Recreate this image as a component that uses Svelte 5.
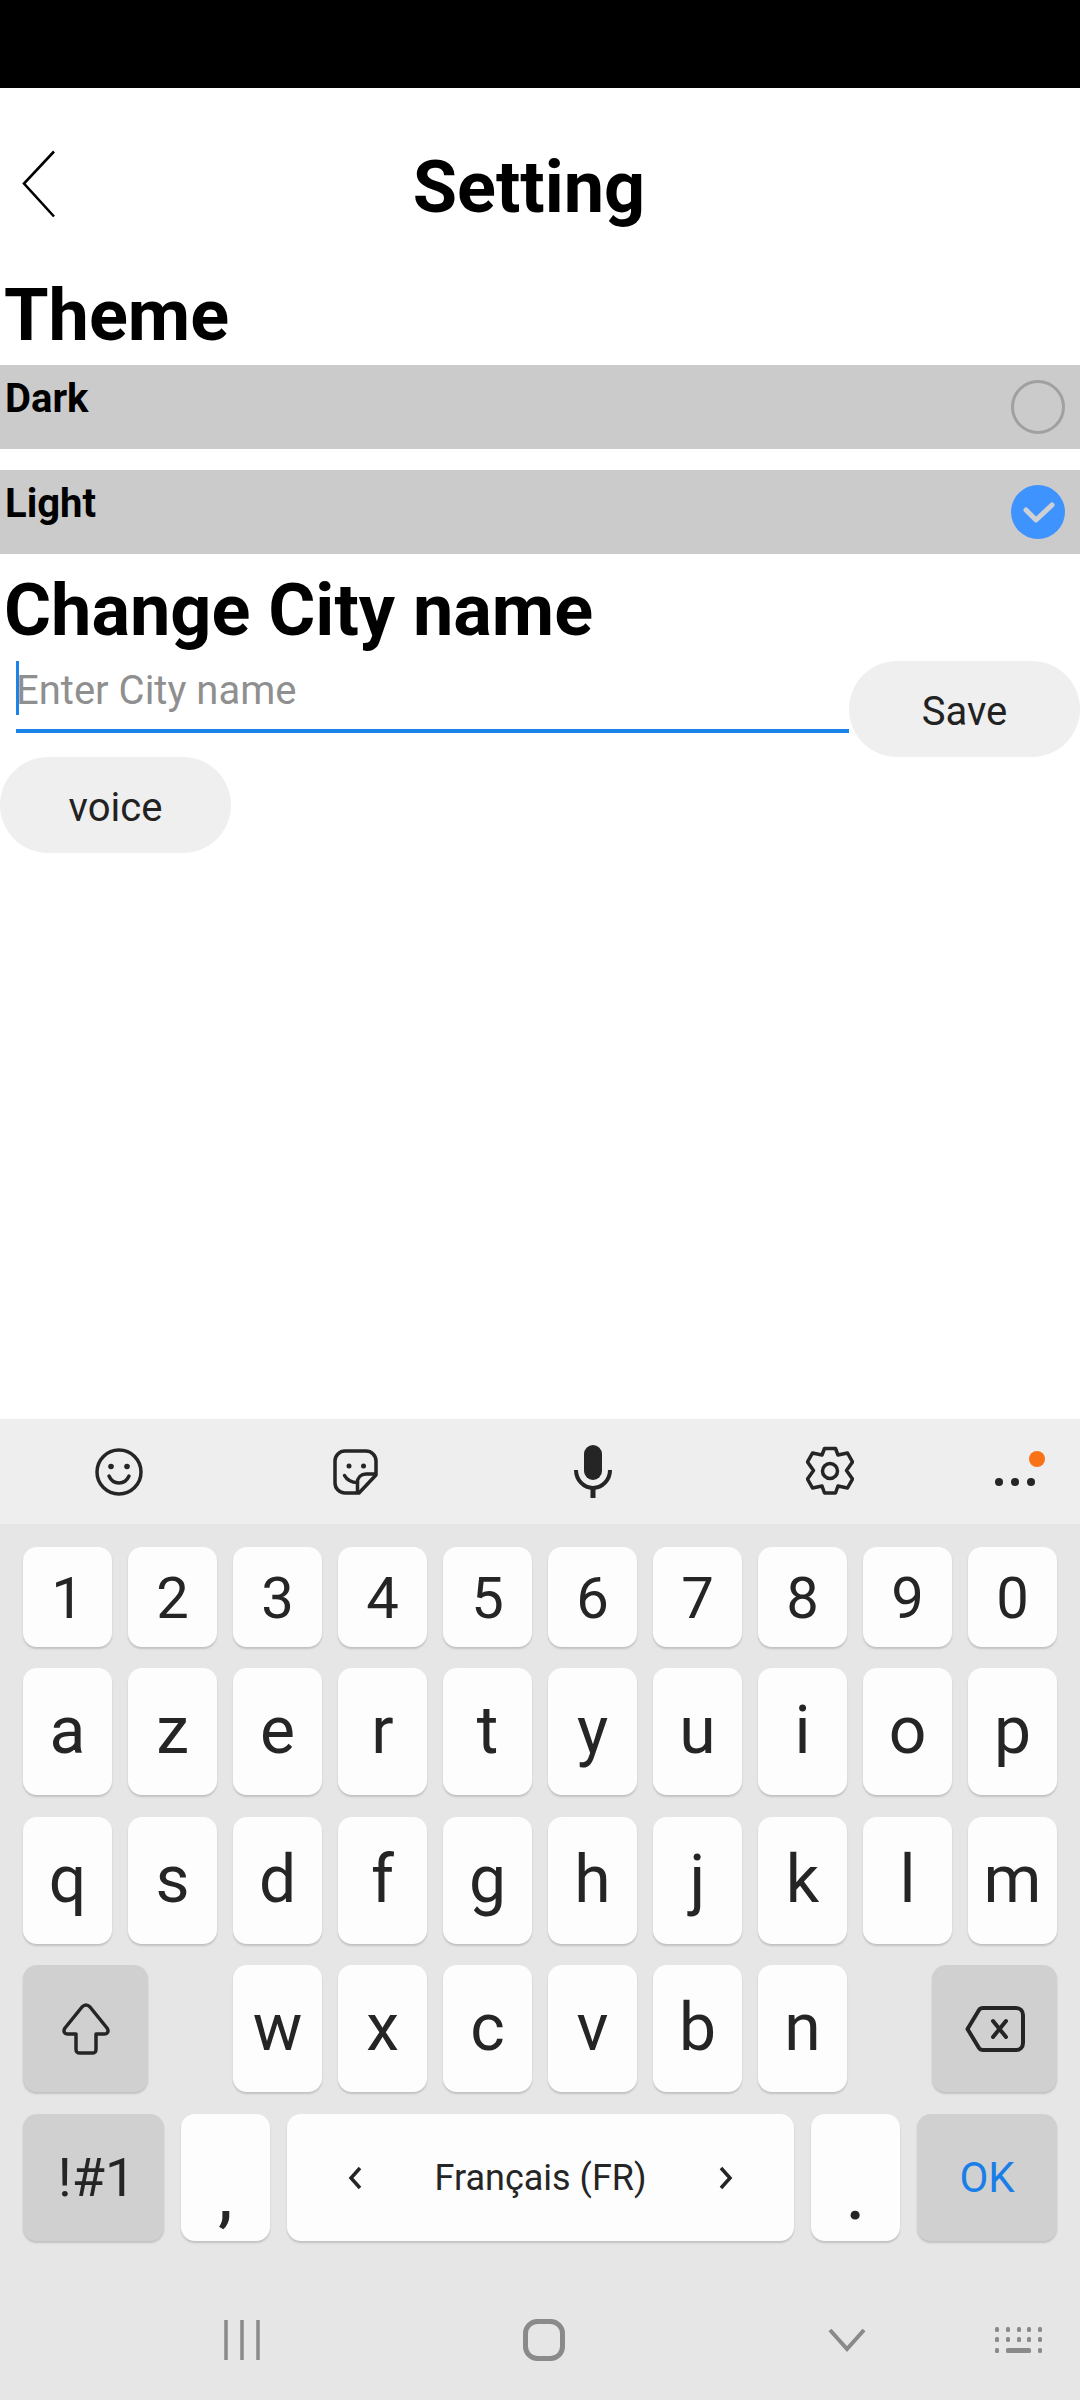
<script>
  const digits = ["1", "2", "3", "4", "5", "6", "7", "8", "9", "0"];
  const rowA = ["a", "z", "e", "r", "t", "y", "u", "i", "o", "p"];
  const rowB = ["q", "s", "d", "f", "g", "h", "j", "k", "l", "m"];
  const rowC = ["w", "x", "c", "v", "b", "n"];

  let city = $state("");
</script>

<div class="screen">
  <div class="status"></div>

  <main>
    <header>
      <svg class="back" width="34" height="68" viewBox="0 0 34 68" aria-hidden="true">
        <path d="M32 1.500 2 33.500l30 33" fill="none" stroke="#000" stroke-width="2.600" />
      </svg>
      <h1>Setting</h1>
    </header>

    <h2 class="theme-title">Theme</h2>
    <div class="option">
      <span>Dark</span>
      <i class="radio"></i>
    </div>
    <div class="option">
      <span>Light</span>
      <i class="radio on">
        <svg width="54" height="54" viewBox="0 0 54 54" aria-hidden="true">
          <path d="M15 25l10 10 16-15" fill="none" stroke="#cfd0d4" stroke-width="5" stroke-linecap="round" stroke-linejoin="round" />
        </svg>
      </i>
    </div>

    <h2 class="city-title">Change City name</h2>
    <div class="city-row">
      <div class="field">
        <i class="caret"></i>
        <input type="text" bind:value={city} placeholder="Enter City name" />
      </div>
      <button type="button" class="pill">Save</button>
    </div>
    <button type="button" class="pill">voice</button>
  </main>

  <section class="keyboard">
    <div class="toolbar">
      <div class="tool">
        <svg width="48" height="48" viewBox="0 0 48 48" aria-hidden="true">
          <circle cx="24" cy="24" r="22" fill="none" stroke="#252525" stroke-width="3.500" />
          <circle cx="16" cy="18.500" r="2.800" fill="#252525" />
          <circle cx="32" cy="18.500" r="2.800" fill="#252525" />
          <path d="M14 28c2 4.500 5.500 7 10 7s8-2.500 10-7" fill="none" stroke="#252525" stroke-width="3.500" stroke-linecap="round" />
        </svg>
      </div>
      <div class="tool">
        <svg width="46" height="46" viewBox="0 0 46 46" fill="none" stroke="#252525" stroke-width="3.500" aria-hidden="true">
          <path d="M12 2h21a10 10 0 0 1 10 10v14L26 44H12A10 10 0 0 1 2 34V12A10 10 0 0 1 12 2z" stroke-linejoin="round" />
          <path d="M43 25H33c-5 0-8.500 3.500-8.500 8.500V44" />
          <path d="M11.500 26.500c2.500 4.500 7 7 13 7" stroke-linecap="round" />
          <circle cx="16" cy="17" r="2.500" fill="#252525" stroke="none" />
          <circle cx="30.500" cy="17" r="2.500" fill="#252525" stroke="none" />
        </svg>
      </div>
      <div class="tool">
        <svg width="38" height="53" viewBox="0 0 38 53" aria-hidden="true">
          <rect x="10" y="0" width="18" height="35" rx="9" fill="#252525" />
          <path d="M2 25a17 18 0 0 0 34 0" fill="none" stroke="#252525" stroke-width="4" />
          <path d="M19 43v10" stroke="#252525" stroke-width="5" />
        </svg>
      </div>
      <div class="tool">
        <svg width="48" height="51" viewBox="0 0 48 51" fill="none" stroke="#252525" stroke-width="3.500" stroke-linejoin="round" aria-hidden="true">
          <path d="M18.500 2.500h11l2.500 6.500 9.500-2 5 9-6 8.500 6 8.500-5 9-9.500-2-2.500 7h-11l-2.500-7-9.500 2-5-9 6-8.500-6-8.500 5-9 9.500 2z" />
          <circle cx="24" cy="25" r="7.500" />
        </svg>
      </div>
      <div class="tool more">
        <svg width="58" height="44" viewBox="0 0 58 44" aria-hidden="true">
          <circle cx="4" cy="32" r="4" fill="#252525" />
          <circle cx="20" cy="32" r="4" fill="#252525" />
          <circle cx="36" cy="32" r="4" fill="#252525" />
          <circle cx="42" cy="9" r="8" fill="#f97316" />
        </svg>
      </div>
    </div>

    <div class="keys">
      <div class="row digits">
        {#each digits as k}<div class="key">{k}</div>{/each}
      </div>
      <div class="row">
        {#each rowA as k}<div class="key letter">{k}</div>{/each}
      </div>
      <div class="row">
        {#each rowB as k}<div class="key letter">{k}</div>{/each}
      </div>
      <div class="row third">
        <div class="key fn wide">
          <svg width="50" height="52" viewBox="0 0 50 52" fill="none" stroke="#252525" stroke-width="3.500" stroke-linejoin="round" aria-hidden="true">
            <path d="M25 2c2 0 3 1 4 2l17 21c2 3 1 6-3 6h-8v15c0 3-1 4-4 4H19c-3 0-4-1-4-4V31H7c-4 0-5-3-3-6L21 4c1-1 2-2 4-2z" />
          </svg>
        </div>
        <div class="spacer"></div>
        {#each rowC as k}<div class="key letter">{k}</div>{/each}
        <div class="spacer"></div>
        <div class="key fn wide">
          <svg width="60" height="46" viewBox="0 0 60 46" fill="none" stroke="#252525" stroke-width="4" stroke-linejoin="round" aria-hidden="true">
            <path d="M2.500 23L14 4c1-1.500 2-2 4-2h33c4 0 7 3 7 7v28c0 4-3 7-7 7H18c-2 0-3-.500-4-2z" />
            <path d="M28 15l13 16M41 15L28 31" stroke-linecap="round" />
          </svg>
        </div>
      </div>
      <div class="row bottom">
        <div class="key fn sym">!#1</div>
        <div class="key low">,</div>
        <div class="key space">
          <svg width="16" height="24" viewBox="0 0 16 24" fill="none" stroke="#252525" stroke-width="3.500" aria-hidden="true"><path d="M13 2L4 12l9 10" /></svg>
          <span>Français (FR)</span>
          <svg width="16" height="24" viewBox="0 0 16 24" fill="none" stroke="#252525" stroke-width="3.500" aria-hidden="true"><path d="M3 2l9 10-9 10" /></svg>
        </div>
        <div class="key low">.</div>
        <div class="key fn ok">OK</div>
      </div>
    </div>

    <nav>
      <svg class="nav-recent" width="36" height="40" viewBox="0 0 36 40" aria-hidden="true">
        <path d="M2 1v38M18 1v38M34 1v38" stroke="#8a8a8a" stroke-width="3.500" stroke-linecap="round" />
      </svg>
      <svg class="nav-home" width="42" height="42" viewBox="0 0 42 42" aria-hidden="true">
        <rect x="2.500" y="2.500" width="37" height="37" rx="12" fill="none" stroke="#8a8a8a" stroke-width="5" />
      </svg>
      <svg class="nav-down" width="38" height="24" viewBox="0 0 38 24" aria-hidden="true">
        <path d="M2 2l17 19L36 2" fill="none" stroke="#8a8a8a" stroke-width="4" />
      </svg>
      <svg class="nav-kb" width="47" height="26" viewBox="0 0 47 26" fill="#8a8a8a" aria-hidden="true">
        <rect x="0" y="0" width="4" height="5" rx="1.500" /><rect x="11" y="0" width="4" height="5" rx="1.500" /><rect x="22" y="0" width="4" height="5" rx="1.500" /><rect x="32" y="0" width="4" height="5" rx="1.500" /><rect x="43" y="0" width="4" height="5" rx="1.500" />
        <rect x="0" y="10" width="4" height="5" rx="1.500" /><rect x="11" y="10" width="4" height="5" rx="1.500" /><rect x="22" y="10" width="4" height="5" rx="1.500" /><rect x="32" y="10" width="4" height="5" rx="1.500" /><rect x="43" y="10" width="4" height="5" rx="1.500" />
        <rect x="0" y="21" width="4" height="5" rx="1.500" /><rect x="11" y="21" width="25" height="5" rx="1.500" /><rect x="43" y="21" width="4" height="5" rx="1.500" />
      </svg>
    </nav>
  </section>
</div>

<style>
  :global(body) {
    margin: 0;
    background: #fff;
  }

  .screen {
    width: 1080px;
    height: 2400px;
    display: flex;
    flex-direction: column;
    overflow: hidden;
    font-family: Roboto, "Liberation Sans", sans-serif;
    color: #000;
  }

  .status {
    height: 88px;
    background: #000;
    flex: none;
  }

  main {
    flex: 1;
    min-height: 0;
  }

  header {
    display: flex;
    align-items: flex-start;
    height: 186px;
    padding-left: 22px;
    box-sizing: border-box;
  }

  .back {
    margin-top: 62px;
    flex: none;
  }

  h1 {
    flex: 1;
    margin: 58px 0 0;
    padding-right: 78px;
    text-align: center;
    font-size: 72px;
    font-weight: 700;
    line-height: 84px;
  }

  h2 {
    margin: 0;
    padding-left: 4px;
    font-size: 72px;
    font-weight: 700;
    line-height: 84px;
  }

  .theme-title {
    margin-bottom: 7px;
  }

  .city-title {
    margin-top: 15px;
    margin-bottom: 8px;
  }

  .option {
    height: 84px;
    background: #cbcbcb;
    display: flex;
    justify-content: space-between;
    align-items: center;
    padding: 0 15px 0 5px;
    font-size: 40px;
    font-weight: 700;
  }

  .option + .option {
    margin-top: 21px;
  }

  .option span {
    align-self: flex-start;
    margin-top: 11px;
    line-height: 46px;
  }

  .radio {
    display: block;
    width: 54px;
    height: 54px;
    box-sizing: border-box;
    border: 3px solid #a0a0a0;
    border-radius: 50%;
  }

  .radio.on {
    border: 0;
    background: #3f93ff;
  }

  .radio svg {
    display: block;
  }

  .city-row {
    display: flex;
    align-items: flex-start;
  }

  .field {
    position: relative;
    flex: 1;
    margin-left: 16px;
    height: 72px;
    box-sizing: border-box;
    border-bottom: 4px solid #1a84e8;
  }

  .field input {
    display: block;
    width: 100%;
    height: 58px;
    padding: 0;
    border: 0;
    outline: 0;
    background: transparent;
    font-family: inherit;
    font-size: 40px;
    color: #000;
    caret-color: #1a84e8;
  }

  .field input::placeholder {
    color: #8f8f8f;
    opacity: 1;
  }

  .caret {
    position: absolute;
    left: 0;
    top: 0;
    width: 3px;
    height: 54px;
    background: #1a84e8;
  }

  .pill {
    display: block;
    width: 231px;
    height: 96px;
    padding: 4px 0 0;
    border: 0;
    border-radius: 48px;
    background: #efefef;
    font-family: inherit;
    font-size: 40px;
    color: #222;
  }

  .keyboard {
    height: 981px;
    flex: none;
    background: #e6e6e6;
    display: flex;
    flex-direction: column;
  }

  .toolbar {
    height: 105px;
    flex: none;
    background: #eee;
    display: flex;
  }

  .tool {
    width: 237px;
    flex: none;
    display: flex;
    align-items: center;
    justify-content: center;
  }

  .tool.more {
    width: 132px;
    justify-content: flex-start;
    padding-left: 47px;
    box-sizing: border-box;
  }

  .keys {
    padding: 23px 24px 0 23px;
    display: flex;
    flex-direction: column;
    gap: 22px;
  }

  .row {
    display: flex;
    gap: 16px;
    height: 127px;
  }

  .row.digits {
    height: 100px;
    margin-bottom: -1px;
  }

  .row.digits .key {
    padding-top: 2px;
  }

  .row.third {
    margin-top: -1px;
  }

  .key {
    width: 89px;
    flex: none;
    box-sizing: border-box;
    display: flex;
    align-items: center;
    justify-content: center;
    border-radius: 14px;
    background: #fdfdfd;
    box-shadow: 0 2px 2px rgba(0, 0, 0, 0.16);
    font-size: 58px;
    color: #252525;
  }

  .key.letter {
    font-size: 66px;
    padding-bottom: 3px;
  }

  .key.fn {
    background: #d0d0d0;
  }

  .key.wide {
    width: 125px;
  }

  .spacer {
    width: 53px;
    flex: none;
  }

  .key.sym {
    width: 141px;
    padding-left: 6px;
    font-size: 54px;
  }

  .key.low {
    font-size: 66px;
    font-weight: 500;
    padding-top: 38px;
  }

  .key.space {
    width: 507px;
    justify-content: space-between;
    padding: 0 60px;
    font-size: 36px;
  }

  .key.ok {
    width: 140px;
    font-size: 42px;
    color: #1a7ee8;
  }

  .row.bottom {
    gap: 17px;
  }

  nav {
    display: flex;
    align-items: center;
    height: 40px;
    margin-top: 79px;
    padding-left: 224px;
  }

  nav svg {
    flex: none;
  }

  .nav-home {
    margin-left: 263px;
  }

  .nav-down {
    margin-left: 263px;
  }

  .nav-kb {
    margin-left: 129px;
  }
</style>
